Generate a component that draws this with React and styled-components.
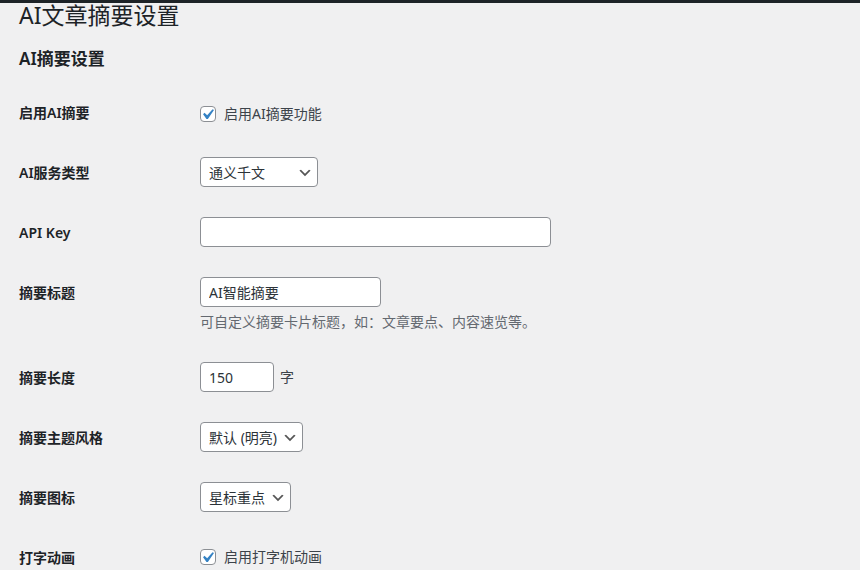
import React from 'react';
import styled, { createGlobalStyle } from 'styled-components';

const GlobalStyle = createGlobalStyle`
    html, body {
        margin: 0;
        padding: 0;
        background: #f0f0f1;
        overflow: hidden;
    }
    body {
        font-family: "Noto Sans", "Noto Sans CJK SC", sans-serif;
        font-size: 14px;
        color: #3c434a;
    }
`;

const AdminBar = styled.div`
    height: 3px;
    background: #1d2327;
`;

const Wrap = styled.div`
    padding: 0 19px;
`;

const Title = styled.h1`
    margin: 0;
    font-size: 23px;
    font-weight: 400;
    line-height: 25px;
    color: #1d2327;
`;

const SectionTitle = styled.h2`
    margin: 20px 0 12px;
    font-size: 17px;
    font-weight: 600;
    line-height: 22px;
    color: #1d2327;
`;

const FormTable = styled.div`
    display: flex;
    flex-direction: column;
`;

const Row = styled.div`
    display: grid;
    grid-template-columns: 181px 1fr;
    align-items: start;
`;

const Label = styled.div`
    padding: 22px 10px 18px 0;
    font-size: 14px;
    font-weight: 600;
    line-height: 18px;
    color: #1d2327;
`;

const Field = styled.div`
    padding: ${props => props.top || 15}px 10px ${props => props.bottom || 15}px 0;
`;

const Control = styled.div`
    display: flex;
    align-items: center;
    gap: 6px;
    min-height: 30px;
    line-height: 18px;
`;

const Description = styled.p`
    margin: 4px 0 0;
    font-size: 14px;
    line-height: 21px;
    color: #646970;
`;

const TextInput = styled.input`
    box-sizing: border-box;
    width: ${props => props.width}px;
    height: 30px;
    margin: 0;
    padding: 0 8px;
    border: 1px solid #8c8f94;
    border-radius: 4px;
    background: #fff;
    font-family: inherit;
    font-size: 14px;
    color: #2c3338;
    outline: none;
`;

const SelectWrap = styled.div`
    position: relative;
    width: ${props => props.width}px;
    height: 30px;
`;

const Select = styled.select`
    appearance: none;
    box-sizing: border-box;
    width: 100%;
    height: 30px;
    margin: 0;
    padding: 0 24px 0 8px;
    border: 1px solid #8c8f94;
    border-radius: 4px;
    background: #fff;
    font-family: inherit;
    font-size: 14px;
    color: #2c3338;
    outline: none;
`;

const Chevron = styled.svg`
    position: absolute;
    right: 5px;
    top: 8px;
    width: 16px;
    height: 16px;
    pointer-events: none;
`;

const CheckLabel = styled.label`
    display: flex;
    align-items: center;
    gap: 8px;
    color: #3c434a;
`;

const Box = styled.span`
    position: relative;
    width: 16px;
    height: 16px;
    flex: none;
`;

const BoxInput = styled.input`
    appearance: none;
    box-sizing: border-box;
    width: 16px;
    height: 16px;
    margin: 0;
    border: 1px solid #8c8f94;
    border-radius: 4px;
    background: #fff;
    display: block;
`;

const Tick = styled.svg`
    position: absolute;
    left: -3px;
    top: -2px;
    width: 21px;
    height: 21px;
    pointer-events: none;
`;

const Unit = styled.span`
    color: #3c434a;
`;

function Checkbox ({ text }) {
    return (
        <CheckLabel>
            <Box>
                <BoxInput type="checkbox" defaultChecked />
                <Tick viewBox="0 0 20 20">
                    <path d="M14.83 4.89l1.34.94-5.81 8.38H9.02L5.78 9.67l1.34-1.25 2.57 2.4z" fill="#3582c4" />
                </Tick>
            </Box>
            {text}
        </CheckLabel>
    );
}

function Dropdown ({ width, options }) {
    return (
        <SelectWrap width={width}>
            <Select defaultValue={options[0]}>
                {options.map(option => <option key={option}>{option}</option>)}
            </Select>
            <Chevron viewBox="0 0 20 20">
                <path d="M5 6l5 5 5-5 2 1-7 7-7-7 2-1z" fill="#555" />
            </Chevron>
        </SelectWrap>
    );
}

export default function App () {
    return (
        <>
            <GlobalStyle />
            <AdminBar />
            <Wrap>
                <Title>AI文章摘要设置</Title>
                <SectionTitle>AI摘要设置</SectionTitle>
                <FormTable>
                    <Row>
                        <Label>启用AI摘要</Label>
                        <Field top={17} bottom={13}>
                            <Control>
                                <Checkbox text="启用AI摘要功能" />
                            </Control>
                        </Field>
                    </Row>
                    <Row>
                        <Label>AI服务类型</Label>
                        <Field>
                            <Control>
                                <Dropdown width={118} options={['通义千文', 'DeepSeek', '文心一言']} />
                            </Control>
                        </Field>
                    </Row>
                    <Row>
                        <Label>API Key</Label>
                        <Field>
                            <Control>
                                <TextInput width={351} type="text" defaultValue="" />
                            </Control>
                        </Field>
                    </Row>
                    <Row>
                        <Label>摘要标题</Label>
                        <Field>
                            <Control>
                                <TextInput width={181} type="text" defaultValue="AI智能摘要" />
                            </Control>
                            <Description>可自定义摘要卡片标题，如：文章要点、内容速览等。</Description>
                        </Field>
                    </Row>
                    <Row>
                        <Label>摘要长度</Label>
                        <Field>
                            <Control>
                                <TextInput width={74} type="text" defaultValue="150" />
                                <Unit>字</Unit>
                            </Control>
                        </Field>
                    </Row>
                    <Row>
                        <Label>摘要主题风格</Label>
                        <Field>
                            <Control>
                                <Dropdown width={103} options={['默认 (明亮)', '暗黑', '简约']} />
                            </Control>
                        </Field>
                    </Row>
                    <Row>
                        <Label>摘要图标</Label>
                        <Field>
                            <Control>
                                <Dropdown width={91} options={['星标重点', '灯泡', '机器人']} />
                            </Control>
                        </Field>
                    </Row>
                    <Row>
                        <Label>打字动画</Label>
                        <Field>
                            <Control>
                                <Checkbox text="启用打字机动画" />
                            </Control>
                        </Field>
                    </Row>
                </FormTable>
            </Wrap>
        </>
    );
}
